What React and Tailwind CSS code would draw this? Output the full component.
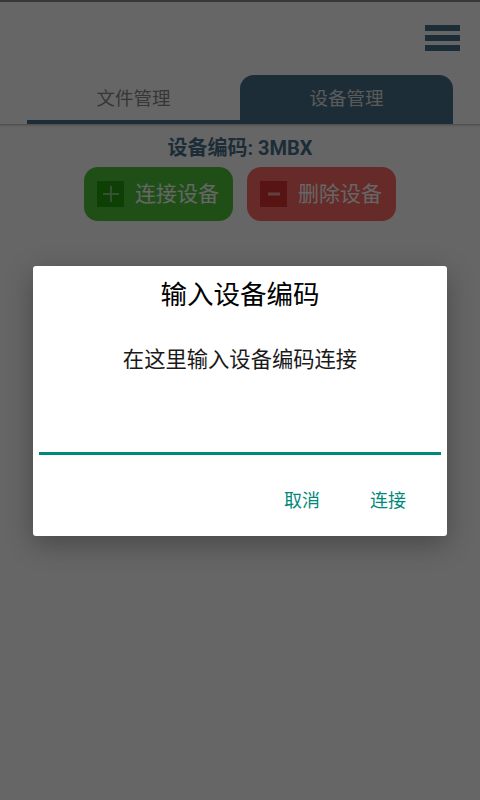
export default function App() {
  return (
    <div className="relative h-[800px] w-[480px] overflow-hidden bg-white font-['Roboto','Noto_Sans_CJK_SC',sans-serif]">
      <div className="h-[2px] bg-[#8a8a8a]" />
      <div className="flex h-[73px] justify-end pr-5 pt-[23px]">
        <div className="flex h-[27px] w-[35px] flex-col gap-[4px]">
          <div className="h-[6px] bg-[#46708a]" />
          <div className="h-[6px] bg-[#46708a]" />
          <div className="h-[6px] bg-[#46708a]" />
        </div>
      </div>
      <div className="border-b border-[#c8c8c8] shadow-[0_1px_2px_rgba(0,0,0,0.15)]">
        <div className="flex h-[49px] px-[27px]">
          <div className="flex h-full w-[213px] items-center justify-center border-b-4 border-[#46708a] pt-[3px] text-[18.5px] leading-none text-[#888888]">
            文件管理
          </div>
          <div className="flex h-full w-[213px] items-center justify-center rounded-t-[14px] bg-[#46708a] text-[18.5px] leading-none text-[#e0e0e0]">
            设备管理
          </div>
        </div>
      </div>
      <div className="pt-[11px] text-center text-[20px] font-bold leading-[24px] text-[#46708a]">设备编码: 3MBX</div>
      <div className="mt-[7px] flex justify-center gap-[14px]">
        <div className="flex h-[54px] w-[149px] items-center rounded-[14px] bg-[#4ec63a] pl-[13px]">
          <div className="flex h-[26px] w-[27px] items-center justify-center bg-[#25a010]">
            <svg width="18" height="18" viewBox="0 0 18 18"><path d="M9 1v16M1 9h16" stroke="#ffffff" strokeOpacity="0.45" strokeWidth="2" /></svg>
          </div>
          <span className="ml-[11px] text-[21px] leading-none text-white">连接设备</span>
        </div>
        <div className="flex h-[54px] w-[149px] items-center rounded-[14px] bg-[#ff6a66] pl-[13px]">
          <div className="flex h-[26px] w-[27px] items-center justify-center bg-[#dc3230]">
            <svg width="14" height="6" viewBox="0 0 14 6"><path d="M1 3h12" stroke="#ffffff" strokeOpacity="0.55" strokeWidth="3" /></svg>
          </div>
          <span className="ml-[11px] text-[21px] leading-none text-white">删除设备</span>
        </div>
      </div>

      <div className="absolute inset-0 flex items-center justify-center bg-black/60 pt-[2px]">
        <div className="flex h-[270px] w-[414px] flex-col rounded-[3px] bg-white shadow-[0_8px_28px_rgba(0,0,0,0.3)]">
          <div className="pt-[10px] text-center text-[26.5px] leading-[38px] text-black">输入设备编码</div>
          <div className="mt-[31px] text-center text-[21.3px] leading-[30px] text-[#1a1a1a]">在这里输入设备编码连接</div>
          <div className="mx-[6px] mt-[77px] h-[3px] bg-[#00897b]" />
          <div className="mt-[33px] flex justify-end gap-[50px] pr-[41px] text-[18px] leading-[26px] text-[#00897b]">
            <span>取消</span>
            <span>连接</span>
          </div>
        </div>
      </div>
    </div>
  );
}
